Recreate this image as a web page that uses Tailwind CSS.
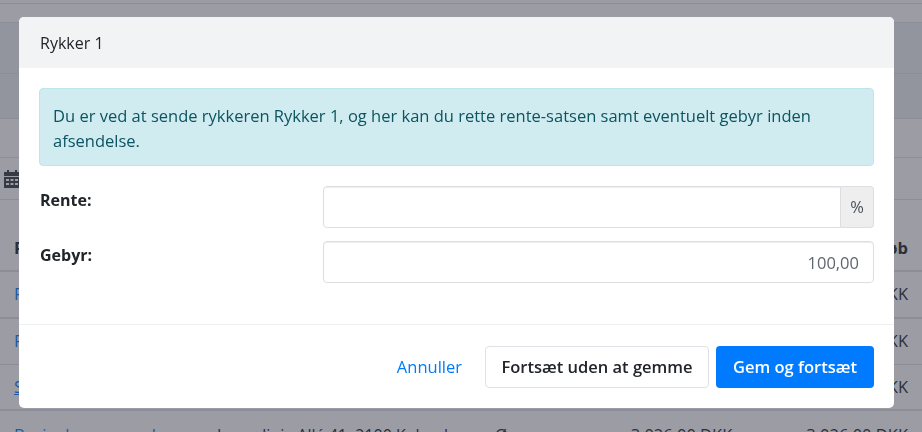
<!DOCTYPE html>
<html lang="da">
<head>
  <meta charset="UTF-8">
  <title>Rykker 1</title>
  <script src="https://cdn.jsdelivr.net/npm/@tailwindcss/browser@4"></script>
</head>
<body class="h-[432px] overflow-hidden bg-white font-['Open_Sans','Noto_Sans',sans-serif] text-base text-[#212529]">

  <!-- page behind the modal -->
  <div class="flex h-[432px] flex-col overflow-hidden text-[16.5px]">
    <div class="h-[4px] shrink-0 border-b border-[#dee2e6]"></div>
    <div class="h-[19px] shrink-0 border-b border-[#dee2e6]"></div>
    <div class="h-[51px] shrink-0 border-b border-[#dee2e6] bg-[#eef0f2]"></div>
    <div class="h-[45px] shrink-0 border-b border-[#dee2e6] bg-[#eef0f2]"></div>
    <div class="h-[39px] shrink-0 border-b border-[#e4e6e9]"></div>
    <div class="flex h-[42px] shrink-0 items-center border-b border-[#dee2e6] pl-[4px]">
      <svg class="h-[18px] w-[16px] fill-[#343a40]" viewBox="0 0 16 18"><path d="M3 0h2v2h6V0h2v2h3v4H0V2h3zM0 7h16v11H0zm2 2v2h3V9zm4.500 0v2h3V9zM11 9v2h3V9zM2 13v2h3v-2zm4.500 0v2h3v-2zm4.500 0v2h3v-2z"/></svg>
    </div>
    <div class="flex h-[72px] shrink-0 items-center justify-between border-b-2 border-[#dee2e6] px-[14px] pt-[27px] font-bold">
      <span>P</span><span>Beløb</span>
    </div>
    <div class="flex h-[47px] shrink-0 items-center justify-between border-b-2 border-[#dee2e6] px-[14px]">
      <a class="text-[#007bff]">P</a><span>3.026,00 DKK</span>
    </div>
    <div class="flex h-[46px] shrink-0 items-center justify-between border-b border-[#dee2e6] px-[14px]">
      <a class="text-[#007bff]">P</a><span>3.026,00 DKK</span>
    </div>
    <div class="flex h-[46px] shrink-0 items-center justify-between border-b-2 border-[#dee2e6] px-[14px]">
      <a class="text-[#007bff] underline">S</a><span>3.026,00 DKK</span>
    </div>
    <div class="flex h-[46px] shrink-0 items-start whitespace-nowrap px-[14px] pt-[12px]">
      <a class="w-[203px] text-[#007bff]">Bevirs kommuneskoven</a>
      <span class="w-[278px] text-base">Lersø linje Allé 41, 2100 København</span>
      <span>Ø</span>
      <span class="ml-auto mr-[74px]">3.026,00 DKK</span>
      <span>3.026,00 DKK</span>
    </div>
  </div>

  <!-- backdrop -->
  <div class="fixed inset-0 bg-[#373a4a]/50"></div>

  <!-- modal -->
  <div class="fixed inset-0 pl-[19px] pt-[17px]">
    <div class="w-[875px] overflow-hidden rounded-[5px] bg-white">
      <div class="flex h-[51px] items-center bg-[#f2f3f5] px-[21px]">Rykker 1</div>

      <div class="flex h-[257px] flex-col border-b border-[#eef0f2] px-[20px] pt-[20px]">
        <div class="h-[78px] rounded-[4px] border border-[#bee5eb] bg-[#d1ecf1] px-[13px] pt-[14px] text-[16.5px] leading-[25px] text-[#0c5460]">
          Du er ved at sende rykkeren Rykker 1, og her kan du rette rente-satsen samt eventuelt gebyr inden afsendelse.
        </div>

        <div class="mt-[20px] flex h-[42px]">
          <label class="w-[284px] shrink-0 pl-px pt-[2px] font-bold">Rente:</label>
          <div class="flex flex-1">
            <input class="h-[42px] min-w-0 flex-1 rounded-l-[4px] border border-[#dcdfe2] bg-white px-3 text-right text-[#5f666d] shadow-[inset_0_1px_1px_rgba(0,0,0,0.075)]" type="text">
            <span class="flex h-[42px] w-[33px] items-center justify-center rounded-r-[4px] border border-l-0 border-[#dcdfe2] bg-[#eeeeee] text-[16.5px] text-[#495057]">%</span>
          </div>
        </div>

        <div class="mt-[13px] flex h-[42px]">
          <label class="w-[284px] shrink-0 pl-px pt-[2px] font-bold">Gebyr:</label>
          <input class="h-[42px] min-w-0 flex-1 rounded-[4px] border border-[#dcdfe2] bg-white pl-3 pr-[14px] text-right text-[16.5px] text-[#5f666d] shadow-[inset_0_1px_1px_rgba(0,0,0,0.075)]" type="text" value="100,00">
        </div>
      </div>

      <div class="flex h-[83px] items-center justify-end gap-[7px] px-[20px] text-[16.5px]">
        <a class="mr-[16px] mt-[2px] text-[#007bff]">Annuller</a>
        <button class="h-[42px] w-[224px] rounded-[4px] border border-[#dee2e6] bg-white pt-[2px] font-semibold">Fortsæt uden at gemme</button>
        <button class="h-[42px] w-[158px] rounded-[4px] bg-[#007bff] pt-[2px] font-semibold text-white">Gem og fortsæt</button>
      </div>
    </div>
  </div>
</body>
</html>
